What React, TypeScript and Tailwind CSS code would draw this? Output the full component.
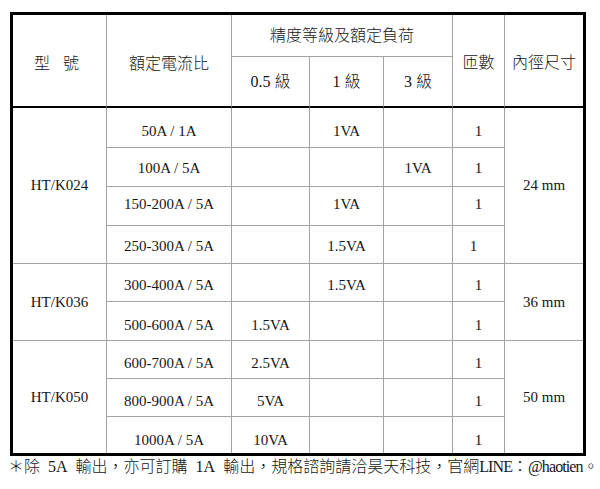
import React from "react";

const G = "border-[#a3a3a3]";

type CellProps = {
  children?: React.ReactNode;
  lastCol?: boolean;
  lastRow?: boolean;
  thick?: boolean;
  rowSpan?: number;
  colSpan?: number;
  className?: string;
};

function Cell({ children, lastCol, lastRow, thick, rowSpan, colSpan, className = "" }: CellProps) {
  const right = lastCol ? "" : "border-r";
  const bottom = thick ? "border-b-2 border-b-black" : lastRow ? "" : "border-b";
  return (
    <td
      rowSpan={rowSpan}
      colSpan={colSpan}
      className={`${G} border-solid ${right} ${bottom} px-0 text-center align-middle whitespace-nowrap ${className}`}
    >
      {children}
    </td>
  );
}

type Row = {
  h: string;
  pad: string;
  model?: { name: string; span: number };
  ratio: string;
  c05: string;
  c1: string;
  c3: string;
  turns: string;
  turnsCls?: string;
  dia?: { v: string; span: number };
  last?: boolean;
};

const rows: Row[] = [
  { h: "h-[40px]", pad: "pt-[7px] pb-0", model: { name: "HT/K024", span: 4 }, ratio: "50A / 1A", c05: "", c1: "1VA", c3: "", turns: "1", dia: { v: "24 mm", span: 4 } },
  { h: "h-[39px]", pad: "pt-[3px] pb-0", ratio: "100A / 5A", c05: "", c1: "", c3: "1VA", turns: "1" },
  { h: "h-[39px]", pad: "pt-0 pb-[4px]", ratio: "150-200A / 5A", c05: "", c1: "1VA", c3: "", turns: "1" },
  { h: "h-[38px]", pad: "pt-[4px] pb-0", ratio: "250-300A / 5A", c05: "", c1: "1.5VA", c3: "", turns: "1", turnsCls: "pr-[10px]" },
  { h: "h-[38px]", pad: "pt-[5px] pb-0", model: { name: "HT/K036", span: 2 }, ratio: "300-400A / 5A", c05: "", c1: "1.5VA", c3: "", turns: "1", dia: { v: "36 mm", span: 2 } },
  { h: "h-[39px]", pad: "pt-[8px] pb-0", ratio: "500-600A / 5A", c05: "1.5VA", c1: "", c3: "", turns: "1" },
  { h: "h-[38px]", pad: "pt-[8px] pb-0", model: { name: "HT/K050", span: 3 }, ratio: "600-700A / 5A", c05: "2.5VA", c1: "", c3: "", turns: "1", dia: { v: "50 mm", span: 3 } },
  { h: "h-[38px]", pad: "pt-[8px] pb-0", ratio: "800-900A / 5A", c05: "5VA", c1: "", c3: "", turns: "1" },
  { h: "h-[36px]", pad: "pt-[10px] pb-0", ratio: "1000A / 5A", c05: "10VA", c1: "", c3: "", turns: "1", last: true },
];

export default function App() {
  return (
    <div
      className="w-[600px] h-[489px] bg-white pt-[12px] pl-[10px] text-[#161616] font-light overflow-hidden"
      style={{ fontFamily: '"Liberation Serif", "Noto Sans CJK TC", serif' }}
    >
      <table className="table-fixed w-[576px] border-separate border-spacing-0 border-[3px] border-solid border-black">
        <colgroup>
          <col className="w-[94px]" />
          <col className="w-[125px]" />
          <col className="w-[78px]" />
          <col className="w-[74px]" />
          <col className="w-[69px]" />
          <col className="w-[52px]" />
          <col className="w-[78px]" />
        </colgroup>
        <thead>
          <tr className="h-[42px] text-[16px]">
            <Cell rowSpan={2} thick className="pt-[6px] pb-0 pr-[6px]">
              <span>型</span>
              <span className="ml-[13px]">號</span>
            </Cell>
            <Cell rowSpan={2} thick className="pt-[6px] pb-0">
              額定電流比
            </Cell>
            <Cell colSpan={3} className="py-0">
              精度等級及額定負荷
            </Cell>
            <Cell rowSpan={2} thick className="pt-[4px] pb-0">
              匝數
            </Cell>
            <Cell rowSpan={2} thick lastCol className="pt-[4px] pb-0">
              內徑尺寸
            </Cell>
          </tr>
          <tr className="h-[51px] text-[16px]">
            <Cell thick className="py-0">0.5 級</Cell>
            <Cell thick className="py-0">1 級</Cell>
            <Cell thick className="py-0">3 級</Cell>
          </tr>
        </thead>
        <tbody className="text-[15px]">
          {rows.map((r, i) => (
            <tr key={i} className={r.h}>
              {r.model && (
                <Cell rowSpan={r.model.span} lastRow={i + r.model.span === rows.length} className="py-0">
                  {r.model.name}
                </Cell>
              )}
              <Cell lastRow={r.last} className={r.pad}>{r.ratio}</Cell>
              <Cell lastRow={r.last} className={r.pad}>{r.c05}</Cell>
              <Cell lastRow={r.last} className={r.pad}>{r.c1}</Cell>
              <Cell lastRow={r.last} className={r.pad}>{r.c3}</Cell>
              <Cell lastRow={r.last} className={`${r.pad} ${r.turnsCls ?? ""}`}>
                {r.turns}
              </Cell>
              {r.dia && (
                <Cell rowSpan={r.dia.span} lastCol lastRow={i + r.dia.span === rows.length} className="py-0">
                  {r.dia.v}
                </Cell>
              )}
            </tr>
          ))}
        </tbody>
      </table>
      <p className="-ml-[2px] mt-[1px] text-[16px] leading-[20px] whitespace-nowrap">
        ＊除{"\u2002"}5A{"\u2002"}輸出，亦可訂購{"\u2002"}1A{"\u2002"}輸出，規格諮詢請洽昊天科技，官網
        <span className="tracking-[-0.9px]">LINE</span>：<span className="tracking-[-0.9px]">@haotien</span>。
      </p>
    </div>
  );
}
